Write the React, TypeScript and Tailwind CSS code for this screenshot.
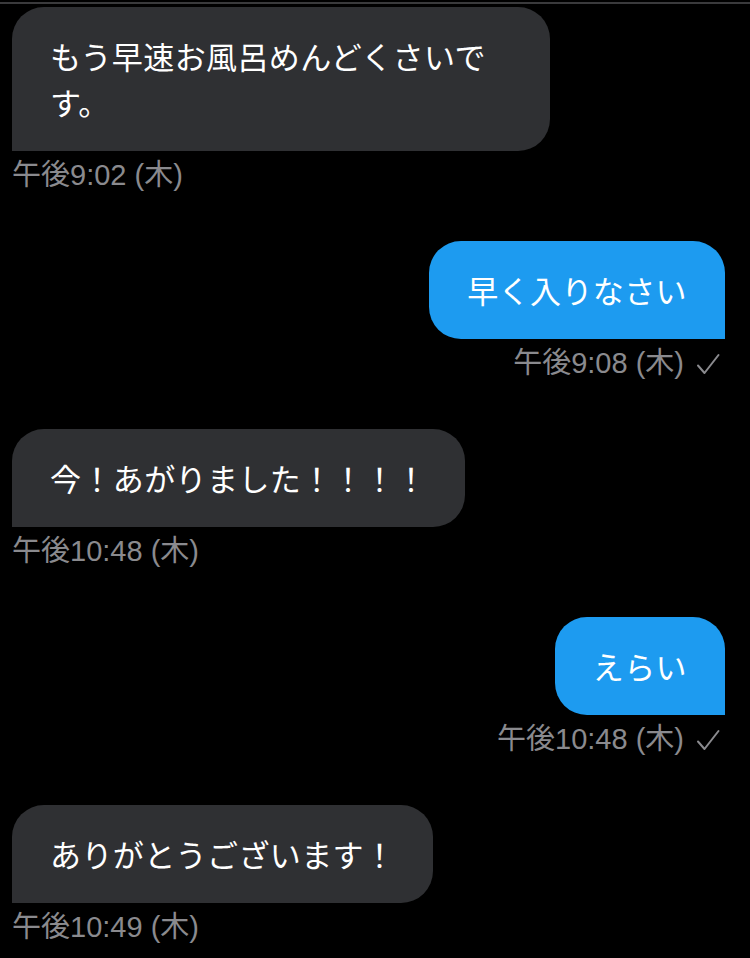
import { Fragment } from "react";

type Message = {
    id: number;
    text: string;
    time: string;
    mine: boolean;
};

const messages: Message[] = [
    { id: 1, text: "もう早速お風呂めんどくさいです。", time: "午後9:02 (木)", mine: false },
    { id: 2, text: "早く入りなさい", time: "午後9:08 (木)", mine: true },
    { id: 3, text: "今！あがりました！！！！", time: "午後10:48 (木)", mine: false },
    { id: 4, text: "えらい", time: "午後10:48 (木)", mine: true },
    { id: 5, text: "ありがとうございます！", time: "午後10:49 (木)", mine: false },
];

function Check() {
    return (
        <svg width="24" height="22" viewBox="0 0 24 22" fill="none" className="ml-[12px]">
            <path d="M2 12.5 L8.5 20 L22.5 2" stroke="#8a8a8e" strokeWidth="2" strokeLinecap="round" strokeLinejoin="round" />
        </svg>
    );
}

export default function App() {
    return (
        <div
            className="w-[750px] h-[958px] bg-black overflow-hidden"
            style={{ fontFamily: '"Liberation Sans", "Noto Sans CJK JP", sans-serif' }}
        >
            {/* top divider */}
            <div className="h-[2px] mt-[2px] bg-[#3a3a3c]" />

            <div className="flex flex-col pl-[12px] pr-[25px] pt-[3px]">
                {messages.map((m, i) => (
                    <Fragment key={m.id}>
                        <div className={`flex ${m.mine ? "justify-end" : "justify-start"} ${i > 0 ? "mt-[50px]" : ""}`}>
                            <div
                                className={`max-w-[538px] px-[38px] py-[26px] text-[31px] leading-[46px] tracking-[0.4px] text-white rounded-[32px] ${m.mine
                                    ? "bg-[#1d9bf0] rounded-br-none"
                                    : "bg-[#2f3033] rounded-bl-none"
                                    }`}
                                style={{ fontFamily: '"Noto Sans CJK JP", sans-serif' }}
                            >
                                {m.text}
                            </div>
                        </div>
                        <div
                            className={`flex items-center h-[30px] mt-[10px] text-[29px] text-[#8a8a8e] ${m.mine ? "justify-end mr-[5px]" : "justify-start"
                                }`}
                        >
                            <span>{m.time}</span>
                            {m.mine && <Check />}
                        </div>
                    </Fragment>
                ))}
            </div>
        </div>
    );
}
